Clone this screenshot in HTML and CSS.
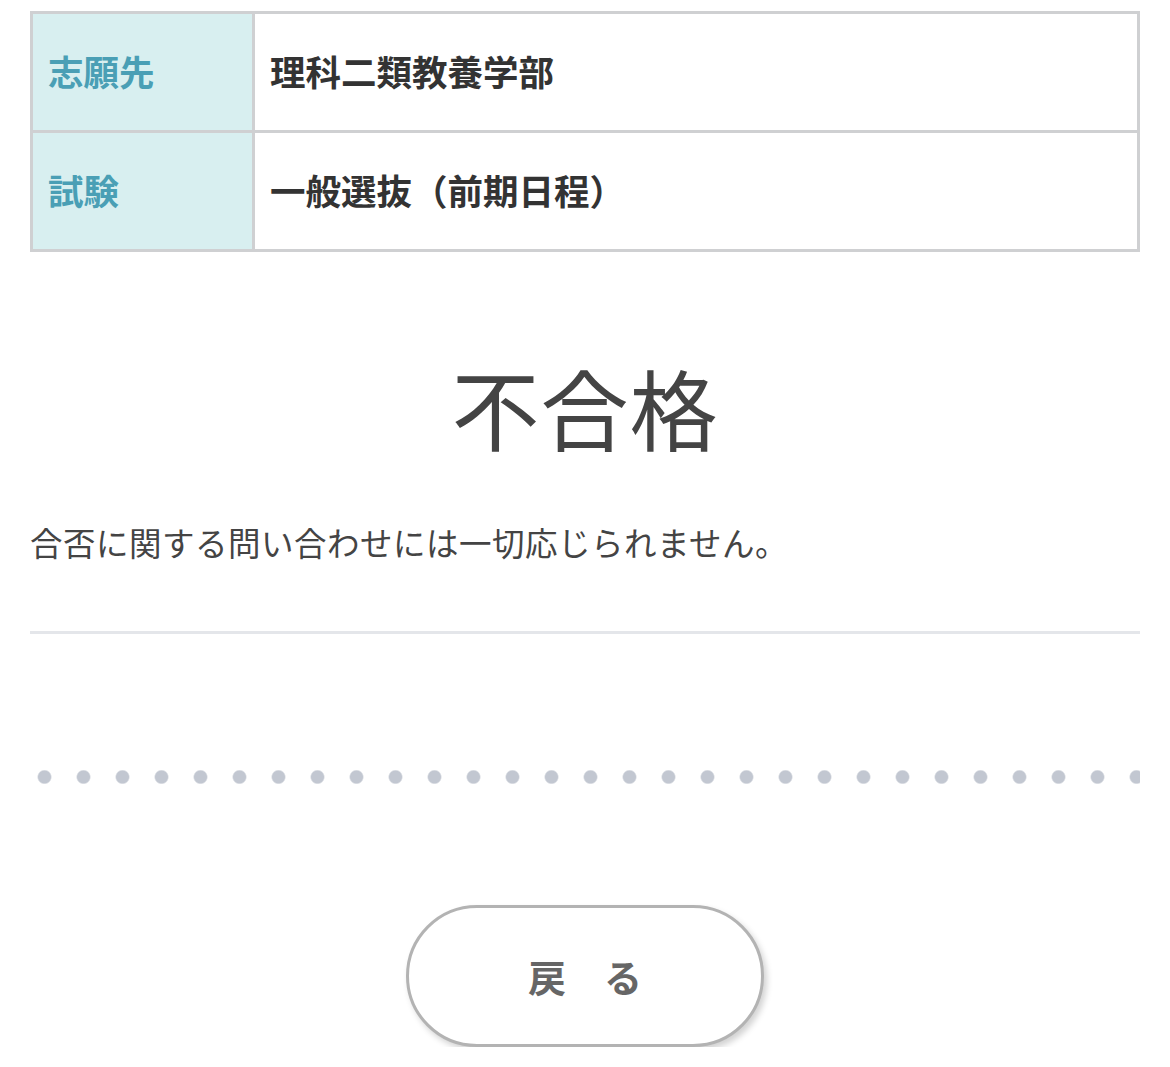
FILE: index.html
```html
<!DOCTYPE html>
<html lang="ja">
<head>
<meta charset="utf-8">
<link rel="stylesheet" href="styles.css">
</head>
<body>
<main class="page">
  <table class="info">
    <tr>
      <th>志願先</th>
      <td>理科二類教養学部</td>
    </tr>
    <tr>
      <th>試験</th>
      <td>一般選抜（前期日程）</td>
    </tr>
  </table>
  <h1 class="result">不合格</h1>
  <p class="note">合否に関する問い合わせには一切応じられません。</p>
  <hr class="rule">
  <div class="dots"></div>
  <div class="actions">
    <button class="back">戻　る</button>
  </div>
</main>
</body>
</html>
```
FILE: styles.css
```css
html, body {
  margin: 0;
  padding: 0;
  background: #fff;
}
body {
  font-family: "Noto Sans CJK JP", "Noto Sans", sans-serif;
  color: #444;
}
.page {
  padding: 11px 30px 0 30px;
}
.info {
  width: 100%;
  border-collapse: collapse;
  border: 3px solid #cfd0d2;
}
.info th, .info td {
  border: 3px solid #cfd0d2;
  height: 119px;
  box-sizing: border-box;
  font-size: 35.5px;
  font-weight: 700;
  text-align: left;
  padding: 0 0 2px 15px;
  line-height: 1;
}
.info th {
  width: 222px;
  background: #d8eff0;
  color: #4a9fb5;
}
.info td {
  color: #333;
}
.result {
  margin: 110px 0 0 0;
  text-align: center;
  font-size: 88px;
  font-weight: 400;
  line-height: 1;
  color: #444;
  letter-spacing: 1px;
}
.note {
  margin: 76px 0 0 0;
  font-size: 32.5px;
  line-height: 1;
  color: #444;
  letter-spacing: 0.5px;
}
.rule {
  margin: 72px 0 0 0;
  border: 0;
  height: 3px;
  background: #e4e6ea;
}
.dots {
  margin-top: 133px;
  height: 20px;
  background-image: radial-gradient(circle, #c2c7d1 6px, rgba(194,199,209,0) 7.5px);
  background-size: 39px 20px;
  background-position: -5px 0;
  background-repeat: repeat-x;
}
.actions {
  display: flex;
  justify-content: center;
  margin-top: 118px;
}
.back {
  width: 358px;
  height: 142px;
  border-radius: 71px;
  border: 3px solid #b3b3b3;
  background: #fff;
  box-shadow: 3px 4px 6px rgba(0,0,0,0.18);
  font-family: "Noto Sans CJK JP", sans-serif;
  font-size: 38px;
  font-weight: 700;
  color: #666;
  letter-spacing: 0;
  padding: 0;
}
```
